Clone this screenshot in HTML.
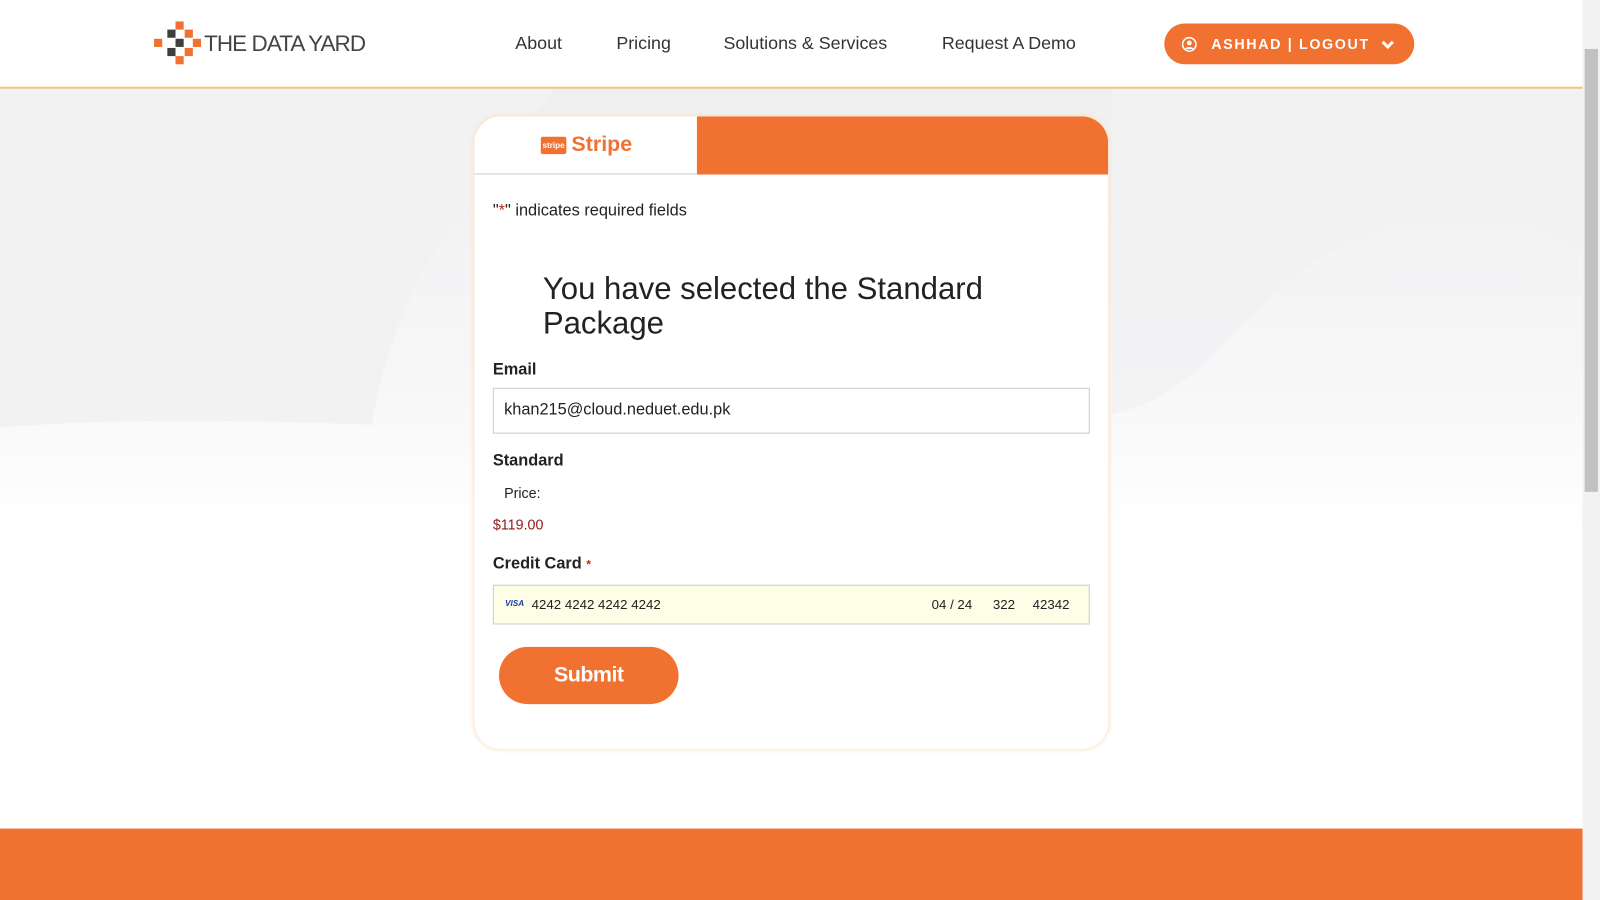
<!DOCTYPE html>
<html><head><meta charset="utf-8"><style>
*{box-sizing:border-box;margin:0;padding:0}
body{width:1600px;height:900px;overflow:hidden;font-family:"Liberation Sans",sans-serif;background:#fff;position:relative}
.wrap{position:absolute;left:0;top:0;width:1568px;height:882px;transform:scale(1.0204);transform-origin:0 0}
.page{position:absolute;left:0;top:0;width:1551px;height:882px;overflow:hidden;background:#fff}
.bg{position:absolute;left:0;top:86px;width:1551px;height:726px;background:linear-gradient(#efeff1,#f7f7f8 40%,#fff 60%)}
header{position:absolute;left:0;top:0;width:1551px;height:87px;background:#fff;border-bottom:2px solid #f6c27d}
.logo{position:absolute;left:151px;top:21px;width:44px;height:44px}
.logo i{position:absolute;width:8px;height:8px}
.o{background:#f07130}.d{background:#3f3f3f}
.brand{position:absolute;left:200px;top:30px;font-size:22px;color:#444;letter-spacing:-.9px}
nav a{position:absolute;top:32px;font-size:17.5px;color:#333;text-decoration:none}
.btn{position:absolute;left:1141px;top:23px;width:245px;height:40px;border-radius:20px;background:#f07130;color:#fff;font-weight:bold;font-size:14px;letter-spacing:1.6px;line-height:40px;padding-left:46px}
.card{position:absolute;left:465px;top:114px;width:621px;height:620px;background:#fff;border-radius:26px;box-shadow:0 0 4px 1px #fbe3c8;overflow:hidden}
.tab{position:absolute;left:0;top:0;width:218px;height:57px;border-bottom:1px solid #ccc}
.tabo{position:absolute;left:218px;top:0;width:403px;height:57px;background:#f07130}
.t{position:absolute;color:#222}
.field{position:absolute;left:18px;width:585px;border:1px solid #ccc;background:#fff}
.footer{position:absolute;left:0;top:812px;width:1551px;height:88px;background:#f07130}
.sb{position:absolute;left:1551px;top:0;width:17px;height:882px;background:#f1f1f1}
.thumb{position:absolute;left:1553px;top:48px;width:13px;height:434px;background:#c1c1c1}
</style></head><body>
<div class="wrap">
<div class="page">
<div class="bg"></div>
<svg style="position:absolute;left:0;top:86px" width="1551" height="726"><path d="M0 333 C150 320 330 330 365 330 C380 220 440 120 545 0 L0 0Z" fill="#f2f2f3"/><path d="M950 0 L1551 0 L1551 160 C1480 110 1380 110 1290 170 C1200 230 1180 300 1090 320 L1090 0Z" fill="#f2f2f3" opacity=".9"/></svg>
<header>
<div class="logo">
<i class="o" style="left:21px;top:0"></i>
<i class="d" style="left:13px;top:8px"></i><i class="o" style="left:30px;top:8px"></i>
<i class="o" style="left:0;top:17px"></i><i class="d" style="left:21px;top:17px"></i><i class="o" style="left:38px;top:17px"></i>
<i class="d" style="left:13px;top:26px"></i><i class="o" style="left:30px;top:26px"></i>
<i class="o" style="left:21px;top:34px"></i>
</div>
<div class="brand">THE DATA YARD</div>
<nav><a style="left:505px">About</a><a style="left:604px">Pricing</a><a style="left:709px">Solutions &amp; Services</a><a style="left:923px">Request A Demo</a></nav>
<div class="btn"><svg style="position:absolute;left:17px;top:13px" width="15" height="15" viewBox="0 0 16 16"><circle cx="8" cy="8" r="7" fill="none" stroke="#fff" stroke-width="1.6"/><circle cx="8" cy="6.5" r="2.5" fill="#fff"/><path d="M3.5 13c1-3 8-3 9 0" fill="#fff"/></svg>ASHHAD | LOGOUT<svg style="position:absolute;left:212px;top:16px" width="14" height="10" viewBox="0 0 14 10"><path d="M2 2l5 5 5-5" stroke="#fff" stroke-width="3" fill="none"/></svg></div>
</header>
<div class="card">
<div class="tab"><span style="position:absolute;left:65px;top:20px;width:25px;height:17px;background:#f07130;border-radius:2px;color:#fff;font-size:8px;font-weight:bold;line-height:17px;text-align:center">stripe</span><span style="position:absolute;left:95px;top:16px;font-size:21px;font-weight:bold;color:#f07130">Stripe</span></div>
<div class="tabo"></div>
<div class="t" style="left:18px;top:84px;font-size:16px">"<span style="color:#c02b0a">*</span>" indicates required fields</div>
<div class="t" style="left:67px;top:152px;font-size:30.5px;line-height:34px;color:#222">You have selected the Standard<br>Package</div>
<div class="t" style="left:18px;top:240px;font-size:16px;font-weight:bold">Email</div>
<div class="field" style="top:266px;height:45px;padding:12px 10px;font-size:16px;color:#222">khan215@cloud.neduet.edu.pk</div>
<div class="t" style="left:18px;top:329px;font-size:16px;font-weight:bold">Standard</div>
<div class="t" style="left:29px;top:361px;font-size:14px">Price:</div>
<div class="t" style="left:18px;top:392px;font-size:14px;color:#8b1a1a">$119.00</div>
<div class="t" style="left:18px;top:430px;font-size:16px;font-weight:bold">Credit Card <span style="color:#c02b0a;font-size:12px">*</span></div>
<div class="field" style="top:459px;height:39px;background:#fefde6;font-size:13px;color:#222">
<span style="position:absolute;left:11px;top:13px;font-size:8px;font-weight:bold;font-style:italic;color:#1a3fa8">VISA</span>
<span style="position:absolute;left:37px;top:11px">4242 4242 4242 4242</span>
<span style="position:absolute;left:429px;top:11px">04 / 24</span>
<span style="position:absolute;left:489px;top:11px">322</span>
<span style="position:absolute;left:528px;top:11px">42342</span></div>
<div style="position:absolute;left:24px;top:520px;width:176px;height:56px;border-radius:28px;background:#f07130;color:#fff;font-size:21px;font-weight:bold;text-align:center;line-height:56px;letter-spacing:-.5px">Submit</div>
</div>
<div class="footer"></div>
</div>
<div class="sb"></div><div class="thumb"></div>
</div>
</body></html>
